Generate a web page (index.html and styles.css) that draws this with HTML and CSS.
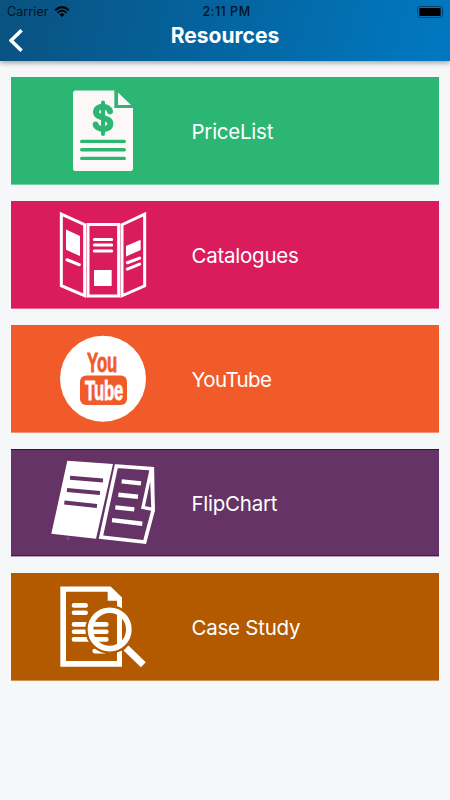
FILE: index.html
```html
<!DOCTYPE html>
<html lang="en">
<head>
    <meta charset="UTF-8">
    <meta name="viewport" content="width=device-width, initial-scale=1.0">
    <title>Resources</title>
    <link rel="stylesheet" href="styles.css">
</head>
<body>
    <header class="header">
        <div class="status-bar">
            <div class="carrier">
                <span>Carrier</span>
                <svg class="wifi" viewBox="0 0 48 34">
                    <path d="M3 13Q24 -6 45 13" fill="none" stroke="#000" stroke-width="6"/>
                    <path d="M10 21Q24 8 38 21" fill="none" stroke="#000" stroke-width="5.5"/>
                    <path d="M16 26Q24 19 32 26L24 34Z"/>
                </svg>
            </div>
            <span class="time">2:11 PM</span>
            <svg class="battery" viewBox="0 0 84 36">
                <rect x="1.5" y="1.5" width="75" height="33" rx="8" fill="none" stroke="#02456f" stroke-width="3"/>
                <rect x="7" y="6" width="64" height="24" rx="3"/>
                <path d="M80 12q4 6 0 12z" fill="#02456f"/>
            </svg>
        </div>
        <div class="title-bar">
            <svg class="back" viewBox="0 0 42 70">
                <path d="M38 4L6 35L38 66" fill="none" stroke="#fff" stroke-width="11"/>
            </svg>
            <h1>Resources</h1>
        </div>
    </header>

    <main class="list">
        <a class="card pricelist">
            <svg class="icon" viewBox="0 3 330 322">
                <path d="M77 43H193V96H249V278Q249 285 242 285H76Q69 285 69 278V51Q69 43 77 43Z" fill="#fcf8f8"/>
                <path d="M204 49V87H243Z" fill="#fcf8f8"/>
                <path d="M180 106C176 87 138 87 138 108C138 129 181 121 181 143C181 165 140 162 137 145" fill="none" stroke="#2cb673" stroke-width="18" stroke-linecap="round"/>
                <path d="M159 79V174" stroke="#2cb673" stroke-width="12" stroke-linecap="round"/>
                <path d="M95 196H223M95 221H223M95 247H223" stroke="#2cb673" stroke-width="10" stroke-linecap="round"/>
            </svg>
            <span class="label">PriceList</span>
        </a>

        <a class="card catalogues">
            <svg class="icon" viewBox="0 3 330 322">
                <g fill="none" stroke="#fff" stroke-width="9">
                    <path d="M34 42L104 74V287L34 257Z"/>
                    <path d="M114 73H206V288H114Z"/>
                    <path d="M216 74L284 42V257L216 287Z"/>
                </g>
                <path d="M48 88L90 108V168L48 149ZM132 210H185V258H132ZM228 138L272 119V150L228 169Z" fill="#fff"/>
                <path d="M133 118H185M133 135H185M133 153H185M51 179L88 194M232 188L269 174M232 207L269 192" stroke="#fff" stroke-width="9" stroke-linecap="round"/>
            </svg>
            <span class="label">Catalogues</span>
        </a>

        <a class="card youtube">
            <svg class="icon" viewBox="0 3 330 322">
                <circle cx="159" cy="164" r="129" fill="#fff"/>
                <rect x="90" y="154" width="141" height="89" rx="18" fill="#f15b29"/>
                <text class="you" x="111" y="143" textLength="91" lengthAdjust="spacingAndGlyphs">You</text>
                <text class="tube" x="105" y="227" textLength="115" lengthAdjust="spacingAndGlyphs">Tube</text>
            </svg>
            <span class="label">YouTube</span>
        </a>

        <a class="card flipchart">
            <svg class="icon" viewBox="15 3 330 322">
                <path d="M67 38L204 48L153 272L19 257Z" fill="#fff"/>
                <path d="M75 89L174 97M66 126L165 135M58 163L156 174" stroke="#653365" stroke-width="12"/>
                <path d="M214 54L322 62L324 188L299 282L168 267Z" fill="none" stroke="#fff" stroke-width="11"/>
                <path d="M319 62L294 178L324 184Z" fill="#653365" stroke="#fff" stroke-width="10"/>
                <path d="M230 100L288 106M220 140L279 146M211 178L268 184M201 216L292 227" stroke="#fff" stroke-width="13"/>
                <circle cx="69" cy="271" r="5" fill="#7a4f7a"/>
            </svg>
            <span class="label">FlipChart</span>
        </a>

        <a class="card casestudy">
            <svg class="icon" viewBox="0 3 330 322">
                <path d="M31 43H182L216 76V284H31ZM48 59V267H201V86H173V59Z" fill="#fff" fill-rule="evenodd"/>
                <path d="M72 100H107M72 122H107M72 157H169M72 179H169M72 202H169M134 237H165" stroke="#fff" stroke-width="14" stroke-linecap="round"/>
                <circle cx="179" cy="172" r="62" fill="none" stroke="#b35a00" stroke-width="22"/>
                <circle cx="179" cy="172" r="57.500" fill="none" stroke="#fff" stroke-width="17"/>
                <path d="M224 223L283 281" stroke="#b35a00" stroke-width="32"/>
                <path d="M228 228L280 278" stroke="#fff" stroke-width="21"/>
            </svg>
            <span class="label">Case Study</span>
        </a>
    </main>
</body>
</html>
```

FILE: styles.css
```css
body {
    margin: 0;
    min-height: 800px;
    background: #f5f7f9;
    font-family: Inter, "Liberation Sans", sans-serif;
}
.header {
    height: 61px;
    background: linear-gradient(105deg, #0a5280 0%, #05619a 40%, #0079c2 100%);
    box-shadow: 0 2px 5px rgba(0, 0, 0, 0.35);
}
.status-bar {
    display: grid;
    grid-template-columns: 1fr auto 1fr;
    align-items: center;
    height: 23px;
    padding: 0 5px 0 7px;
    color: #03131f;
    font-size: 12.5px;
    line-height: 23px;
}
.carrier {
    display: flex;
    align-items: center;
    gap: 6px;
}
.carrier span {
    width: 41px;
    letter-spacing: 0.1px;
}
.wifi {
    width: 16px;
    height: 11px;
}
.time {
    margin-left: 1px;
    font-weight: 500;
    letter-spacing: 0.5px;
}
.battery {
    justify-self: end;
    width: 28px;
    height: 12px;
}
.title-bar {
    display: grid;
    grid-template-columns: 60px 1fr 60px;
    height: 38px;
}
.back {
    width: 14px;
    height: 23px;
    margin: 6px 0 0 9px;
}
h1 {
    margin: 0;
    color: #fff;
    font-size: 21px;
    font-weight: 650;
    line-height: 26px;
    text-align: center;
}
.list {
    display: flex;
    flex-direction: column;
    gap: 16px;
    padding: 16px 11px;
}
.card {
    display: flex;
    align-items: center;
    box-sizing: border-box;
    height: 108px;
    padding-left: 39px;
    color: #fff;
    box-shadow: inset 0 -1px rgba(255, 255, 255, 0.35);
}
.pricelist {
    background: #2cb673;
}
.catalogues {
    background: #db1c5c;
}
.youtube {
    background: #f15b29;
}
.youtube .label {
    letter-spacing: -0.6px;
}
.flipchart {
    background: #653365;
    box-shadow: inset 0 1px #3c0f40, inset 0 -1px #b49bb6, inset 0 -2px #4c1750;
}
.casestudy {
    background: #b35a00;
}
.icon {
    width: 110px;
    height: 107.5px;
}
.label {
    margin: 2px 0 0 31.5px;
    font-size: 20.5px;
    line-height: 28px;
    letter-spacing: -0.25px;
}
.you,
.tube {
    font: bold 82px "Liberation Sans", sans-serif;
    fill: #f15b29;
    stroke: #f15b29;
    stroke-width: 2.5px;
}
.tube {
    fill: #fff;
    stroke: #fff;
}
```
